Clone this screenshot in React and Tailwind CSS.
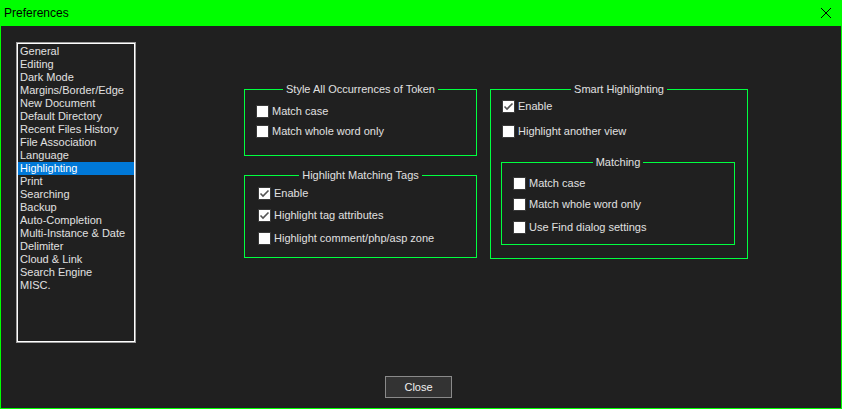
import React from "react";

const items = [
  "General","Editing","Dark Mode","Margins/Border/Edge","New Document","Default Directory",
  "Recent Files History","File Association","Language","Highlighting","Print","Searching",
  "Backup","Auto-Completion","Multi-Instance & Date","Delimiter","Cloud & Link","Search Engine","MISC."
];

function Box({ checked }) {
  return (
    <div className="w-[13px] h-[13px] bg-white border border-[#3a3a3a] shrink-0 flex items-center justify-center">
      {checked && (
        <svg width="11" height="11" viewBox="0 0 11 11">
          <path d="M1.5 5.5 L4 8 L9.5 2.5" fill="none" stroke="#555" strokeWidth="1.6" />
        </svg>
      )}
    </div>
  );
}

function Row({ checked, label, className = "" }) {
  return (
    <div className={"flex items-center h-[13px] gap-[3px] " + className}>
      <Box checked={checked} />
      <span className="leading-[13px] whitespace-nowrap">{label}</span>
    </div>
  );
}

function Group({ title, className = "", children }) {
  return (
    <div className={"relative border border-[#00ff40] " + className}>
      <div className="absolute left-0 right-0 top-[-7px] flex justify-center">
        <span className="bg-[#202020] px-[3px] leading-[13px]">{title}</span>
      </div>
      {children}
    </div>
  );
}

export default function App() {
  return (
    <div
      className="w-[842px] h-[409px] bg-[#202020] flex flex-col border-x border-b border-[#00ff00] text-[#e0e0e0] text-[11px]"
      style={{ fontFamily: "Tahoma, 'Liberation Sans', Arial, sans-serif" }}
    >
      <div className="h-[26px] bg-[#00ff00] -mx-px flex items-center justify-between shrink-0">
        <span className="text-black text-[12px] pl-[4px]">Preferences</span>
        <svg width="12" height="12" viewBox="0 0 12 12" className="mr-[10px]">
          <path d="M1 1 L11 11 M11 1 L1 11" stroke="#000" strokeWidth="1" />
        </svg>
      </div>
      <div className="flex flex-col">
        <div className="flex items-start">
          <div className="ml-[15px] mt-[16px] w-[120px] h-[301px] border border-[#a0a0a0] shrink-0">
            <div className="w-full h-full border border-white pt-[1px]">
              {items.map((it) => (
                <div
                  key={it}
                  className={
                    "h-[13px] leading-[13px] pl-[2px] whitespace-nowrap " +
                    (it === "Highlighting" ? "bg-[#0078d7] text-white" : "")
                  }
                >
                  {it}
                </div>
              ))}
            </div>
          </div>
          <div className="ml-[108px] mt-[63px] flex gap-[13px] items-start">
            <div className="flex flex-col gap-[19px]">
              <Group title="Style All Occurrences of Token" className="w-[233px] h-[67px] pt-[15px] pl-[11px]">
                <Row label="Match case" />
                <Row label="Match whole word only" className="mt-[7px]" />
              </Group>
              <Group title="Highlight Matching Tags" className="w-[233px] h-[83px] pt-[11px] pl-[13px]">
                <Row checked label="Enable" />
                <Row checked label="Highlight tag attributes" className="mt-[9px]" />
                <Row label="Highlight comment/php/asp zone" className="mt-[10px]" />
              </Group>
            </div>
            <Group title="Smart Highlighting" className="w-[258px] h-[170px] pt-[10px] pl-[11px]">
              <Row checked label="Enable" />
              <Row label="Highlight another view" className="mt-[12px]" />
              <Group title="Matching" className="mt-[24px] -ml-px w-[234px] h-[83px] pt-[14px] pl-[11px]">
                <Row label="Match case" />
                <Row label="Match whole word only" className="mt-[8px]" />
                <Row label="Use Find dialog settings" className="mt-[10px]" />
              </Group>
            </Group>
          </div>
        </div>
        <div className="ml-[384px] mt-[33px] w-[67px] h-[22px] bg-[#333333] border border-[#8a8a8a] flex items-center justify-center text-[#f0f0f0] leading-[13px]">
          Close
        </div>
      </div>
    </div>
  );
}
